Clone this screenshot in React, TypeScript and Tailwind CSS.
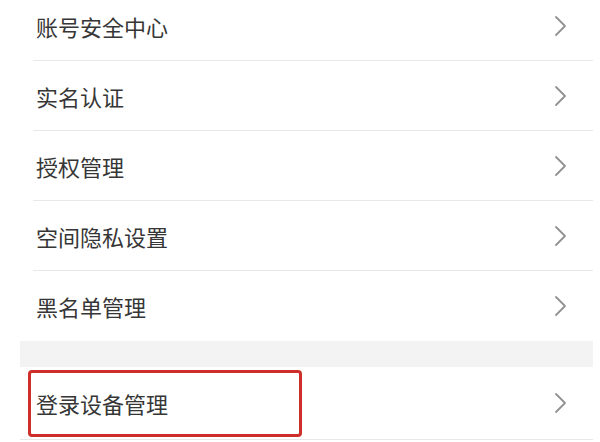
const items = ['账号安全中心', '实名认证', '授权管理', '空间隐私设置', '黑名单管理']

function Chevron() {
  return (
    <svg width="13" height="22" viewBox="0 0 13 22" fill="none" className="shrink-0">
      <path d="M2 2 L11 11 L2 20" stroke="#929292" strokeWidth="1.8" strokeLinecap="round" strokeLinejoin="round" />
    </svg>
  )
}

function Row({ label, last }: { label: string; last?: boolean }) {
  return (
    <div className="relative h-[70px] flex items-center">
      <span className="pl-[16px] text-[22px] text-[#363636] leading-none">{label}</span>
      <div className="ml-auto mr-[26px]">
        <Chevron />
      </div>
      {!last && <div className="absolute left-[13px] right-0 bottom-0 h-px bg-[#e8e8e8]" />}
    </div>
  )
}

export default function App() {
  return (
    <div
      className="w-[600px] h-[442px] overflow-hidden bg-white"
      style={{ fontFamily: '"Noto Sans CJK SC", "Noto Sans", sans-serif' }}
    >
      <div className="ml-[20px] w-[573px] -mt-[9px]">
        {items.map((t, i) => (
          <Row key={t} label={t} last={i === items.length - 1} />
        ))}
        <div className="h-[26px] bg-[#f3f3f3]" />
        <div className="relative h-[73px] flex items-center border-b border-[#e8e8e8]">
          <span className="pl-[16px] text-[22px] text-[#363636] leading-none">登录设备管理</span>
          <div className="ml-auto mr-[26px]">
            <Chevron />
          </div>
          <div className="absolute left-[8px] top-[3px] w-[274px] h-[67px] border-[3px] border-[#cf2f2b] rounded-[4px]" />
        </div>
      </div>
    </div>
  )
}
